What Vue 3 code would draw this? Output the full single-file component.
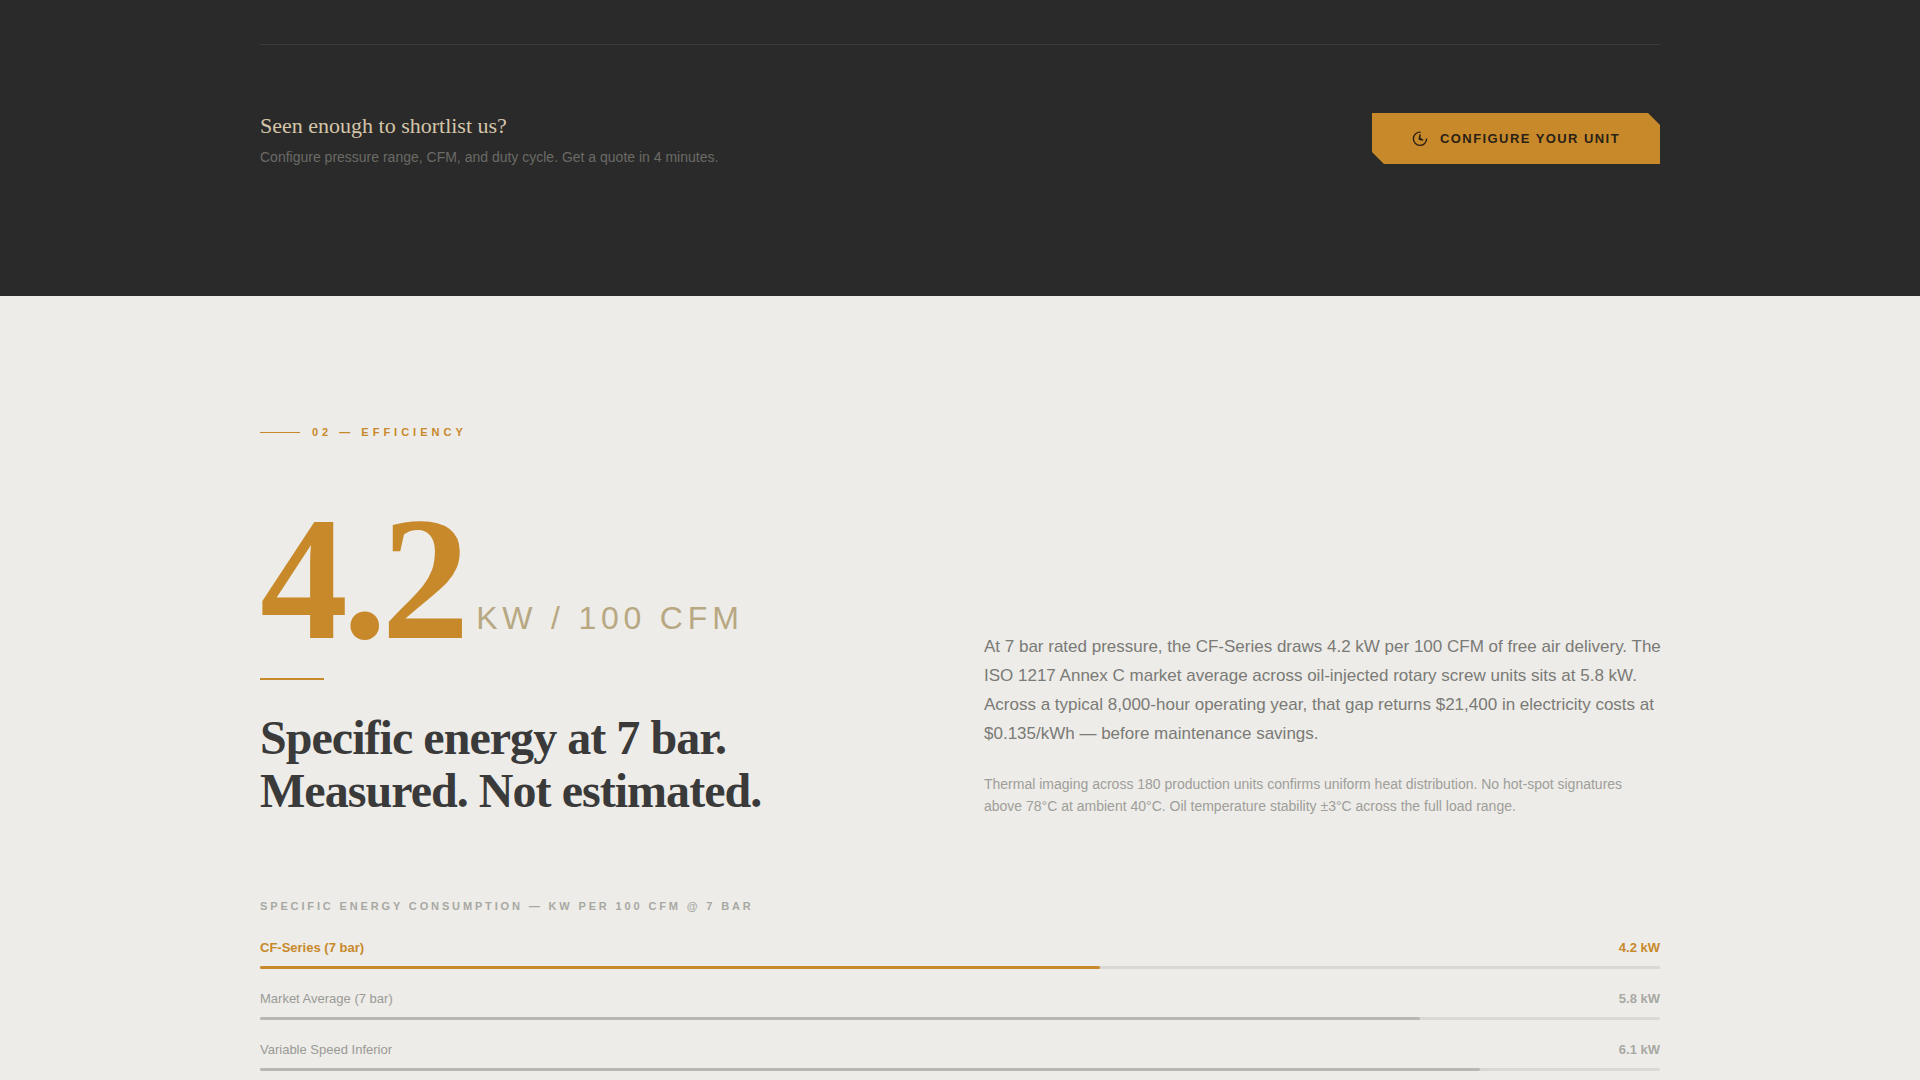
<script setup>
const scaleMax = 7
const series = [
  { label: 'CF-Series (7 bar)', value: 4.2, lead: true },
  { label: 'Market Average (7 bar)', value: 5.8, lead: false },
  { label: 'Variable Speed Inferior', value: 6.1, lead: false }
]
</script>

<template>
  <main class="page">
    <section class="shortlist">
      <div class="container">
        <div class="cta">
          <div class="cta-text">
            <p class="cta-title">Seen enough to shortlist us?</p>
            <p class="cta-sub">Configure pressure range, CFM, and duty cycle. Get a quote in 4 minutes.</p>
          </div>
          <button type="button" class="cta-button">
            <svg class="cta-icon" viewBox="0 0 16 16" aria-hidden="true">
              <path d="M8.6 1.2A6.6 6.6 0 1 0 14.6 7.6" fill="none" stroke="currentColor" stroke-width="1.4" />
              <path d="M7.4 3.2H8.6V7L11.6 8.8A1.9 1.9 0 0 1 10.8 9.8L8 9.2A1.5 1.5 0 0 1 6.5 7.8Z" fill="currentColor" />
            </svg>
            <span>CONFIGURE YOUR UNIT</span>
          </button>
        </div>
      </div>
    </section>

    <section class="efficiency">
      <div class="container">
        <p class="eyebrow">02 — EFFICIENCY</p>

        <div class="columns">
          <div>
            <p class="figure">
              <span class="figure-value">4.2</span>
              <span class="figure-unit">KW / 100 CFM</span>
            </p>
            <div class="rule"></div>
            <h2 class="heading">Specific energy at 7 bar.<br />Measured. Not estimated.</h2>
          </div>
          <div>
            <p class="body-text">
              At 7 bar rated pressure, the CF-Series draws 4.2 kW per 100 CFM of free air delivery. The ISO 1217
              Annex C market average across oil-injected rotary screw units sits at 5.8 kW. Across a typical
              8,000-hour operating year, that gap returns $21,400 in electricity costs at $0.135/kWh — before
              maintenance savings.
            </p>
            <p class="note">
              Thermal imaging across 180 production units confirms uniform heat distribution. No hot-spot
              signatures above 78°C at ambient 40°C. Oil temperature stability ±3°C across the full load range.
            </p>
          </div>
        </div>

        <h3 class="chart-title">SPECIFIC ENERGY CONSUMPTION — KW PER 100 CFM @ 7 BAR</h3>
        <ul class="chart">
          <li v-for="row in series" :key="row.label" class="row" :class="{ lead: row.lead }">
            <div class="row-head">
              <span class="row-label">{{ row.label }}</span>
              <span class="row-value">{{ row.value.toFixed(1) }} kW</span>
            </div>
            <div class="track">
              <div class="fill" :style="{ width: (row.value / scaleMax) * 100 + '%' }"></div>
            </div>
          </li>
        </ul>
      </div>
    </section>
  </main>
</template>

<style>
body {
  margin: 0;
  background: #edece8;
}
</style>

<style scoped>
.page {
  font-family: "Liberation Sans", Arial, sans-serif;
}

p,
h2,
h3,
ul {
  margin: 0;
  padding: 0;
}

.container {
  max-width: 1400px;
  margin: 0 auto;
}

.shortlist {
  padding: 44px 48px 128px;
  background: #2a2a2a;
}

.cta {
  display: flex;
  align-items: center;
  justify-content: space-between;
  gap: 32px;
  padding-top: 64px;
  border-top: 1px solid #3b3b3a;
}

.cta-title {
  margin-bottom: 4px;
  color: #d4c5a9;
  font-family: "Liberation Serif", "Times New Roman", serif;
  font-size: 22px;
  line-height: 34px;
}

.cta-sub {
  color: #6b6b66;
  font-size: 14px;
  line-height: 21px;
}

.cta-button {
  display: flex;
  align-items: center;
  gap: 12px;
  flex-shrink: 0;
  height: 51px;
  padding: 0 40px;
  border: 0;
  background: #c8892b;
  color: #2a2115;
  clip-path: polygon(0 0, calc(100% - 12px) 0, 100% 12px, 100% 100%, 12px 100%, 0 calc(100% - 12px));
  font-family: inherit;
  font-size: 13px;
  font-weight: 700;
  letter-spacing: 0.11em;
  cursor: pointer;
}

.cta-icon {
  width: 16px;
  height: 16px;
}

.efficiency {
  padding: 128px 48px 8px;
  background: #edece8;
}

.eyebrow {
  display: flex;
  align-items: center;
  gap: 12px;
  margin-bottom: 64px;
  color: #c8892b;
  font-size: 11px;
  font-weight: 700;
  line-height: 16px;
  letter-spacing: 4px;
}

.eyebrow::before {
  content: "";
  width: 40px;
  height: 1px;
  background: #c8892b;
}

.columns {
  display: grid;
  grid-template-columns: 1fr 1fr;
  align-items: end;
  gap: 48px;
  margin-bottom: 81px;
}

.figure {
  display: flex;
  align-items: flex-end;
  gap: 12px;
}

.figure-value {
  color: #c8892b;
  font-family: "Liberation Serif", "Times New Roman", serif;
  font-size: 176px;
  font-weight: 700;
  line-height: 150px;
  letter-spacing: -0.03em;
}

.figure-unit {
  padding-bottom: 16px;
  color: #b8a882;
  font-size: 32px;
  line-height: 40px;
  letter-spacing: 0.15em;
}

.rule {
  width: 64px;
  height: 2px;
  margin: 24px 0 31px;
  background: #c8892b;
}

.heading {
  color: #3a3a3a;
  font-family: "Liberation Serif", "Times New Roman", serif;
  font-size: 48px;
  line-height: 53px;
  letter-spacing: -0.02em;
}

.body-text {
  margin: 0 -4px 25px 0;
  color: #7a7a76;
  font-size: 17px;
  line-height: 29px;
}

.note {
  color: #9e9e9a;
  font-size: 14px;
  line-height: 22px;
}

.chart-title {
  margin-bottom: 24px;
  color: #a8a8a3;
  font-size: 11px;
  line-height: 16px;
  letter-spacing: 0.26em;
}

.chart {
  display: grid;
  gap: 20px;
  list-style: none;
}

.row-head {
  display: flex;
  justify-content: space-between;
  margin-bottom: 8px;
  color: #9a9a96;
  font-size: 13px;
  line-height: 20px;
}

.row-value {
  color: #a8a8a4;
  font-weight: 700;
}

.lead .row-label,
.lead .row-value {
  color: #c8892b;
  font-weight: 700;
}

.track {
  height: 3px;
  border-radius: 2px;
  background: #d9d8d4;
}

.fill {
  height: 100%;
  border-radius: 2px;
  background: #b7b8b3;
}

.lead .fill {
  background: #c8892b;
}
</style>
